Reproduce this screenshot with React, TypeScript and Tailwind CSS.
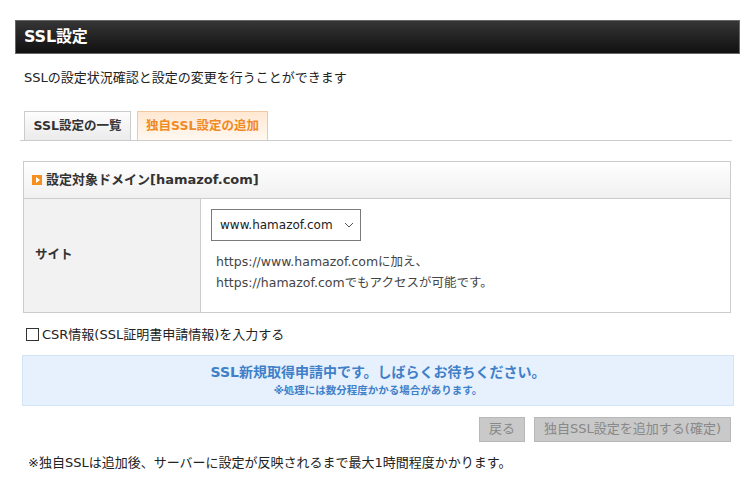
import React from "react";

export default function App() {
  const font = { fontFamily: '"DejaVu Sans", "Noto Sans CJK JP", sans-serif' };
  return (
    <div className="w-[747px] h-[497px] bg-white text-[#333] overflow-hidden" style={font}>
      <div className="pt-[20px] pl-[15px] pr-[7px]">
        <div className="h-[34px] border border-[#666] bg-gradient-to-b from-[#363636] to-[#111] flex items-center pl-[8px]">
          <span className="text-white font-bold text-[16px] tracking-[-0.2px]">SSL設定</span>
        </div>
      </div>
      <div className="pl-[24px] pt-[15px] text-[13px] leading-[18px] text-[#222]">
        SSLの設定状況確認と設定の変更を行うことができます
      </div>
      <div className="mt-[24px] ml-[20px] mr-[15px] flex items-end border-b border-[#ccc] pl-[4px] gap-[6px]">
        <div className="h-[29px] w-[107px] flex items-center justify-center border border-b-0 border-[#ccc] bg-gradient-to-b from-[#fdfdfd] to-[#ebebeb] text-[12.5px] font-bold text-[#333]">
          SSL設定の一覧
        </div>
        <div className="h-[29px] w-[131px] flex items-center justify-center border border-b-0 border-[#f0c9a3] bg-gradient-to-b from-[#ffe8d2] to-[#fff8f1] text-[12.5px] font-bold text-[#f08a24]">
          独自SSL設定の追加
        </div>
      </div>
      <div className="mt-[20px] ml-[23px] mr-[16px] border border-[#ccc]">
        <div className="h-[37px] border-b border-[#ccc] bg-gradient-to-b from-white to-[#f0f0f0] flex items-center pl-[8px] gap-[4px]">
          <span className="w-[10px] h-[10px] bg-[#f5901e] flex items-center justify-center">
            <span className="w-0 h-0 border-y-[3px] border-y-transparent border-l-[4px] border-l-white ml-[1px]"></span>
          </span>
          <span className="text-[13px] font-bold text-[#333]">設定対象ドメイン[hamazof.com]</span>
        </div>
        <div className="flex h-[113px]">
          <div className="w-[177px] bg-[#f2f2f2] border-r border-[#ccc] flex items-center pl-[11px] text-[12.5px] font-bold text-[#333]">
            サイト
          </div>
          <div className="flex-1 pl-[10px] pt-[10px]">
            <div className="w-[150px] h-[32px] border border-[#7a7a7a] flex items-center justify-between pl-[8px] pr-[6px] text-[12px] text-[#222]">
              <span>www.hamazof.com</span>
              <svg width="10" height="6" viewBox="0 0 10 6" fill="none" stroke="#555" strokeWidth="1">
                <path d="M1 1 L5 5 L9 1" />
              </svg>
            </div>
            <div className="mt-[10px] pl-[5px] text-[12.5px] leading-[21px] text-[#444]">
              <div>https://www.hamazof.comに加え、</div>
              <div>https://hamazof.comでもアクセスが可能です。</div>
            </div>
          </div>
        </div>
      </div>
      <div className="mt-[12px] ml-[26px] flex items-center gap-[3px] text-[13px] text-[#222]">
        <span className="w-[13px] h-[13px] border border-[#333] bg-white"></span>
        <span>CSR情報(SSL証明書申請情報)を入力する</span>
      </div>
      <div className="mt-[10px] ml-[22px] mr-[13px] h-[51px] bg-[#e6f1fd] border border-[#d3e4f6] flex flex-col items-center justify-center">
        <div className="text-[14px] font-bold text-[#3f80c8] leading-[20px]">SSL新規取得申請中です。しばらくお待ちください。</div>
        <div className="text-[10.5px] font-bold text-[#3f80c8] leading-[16px]">※処理には数分程度かかる場合があります。</div>
      </div>
      <div className="mt-[11px] mr-[16px] flex justify-end gap-[9px]">
        <div className="h-[25px] px-[9px] bg-[#c9c9c9] border border-[#b8b8b8] flex items-center text-[13px] text-[#888]">戻る</div>
        <div className="h-[25px] px-[9px] bg-[#c9c9c9] border border-[#b8b8b8] flex items-center text-[13px] text-[#888]">独自SSL設定を追加する(確定)</div>
      </div>
      <div className="mt-[11px] ml-[28px] text-[13px] text-[#222]">
        ※独自SSLは追加後、サーバーに設定が反映されるまで最大1時間程度かかります。
      </div>
    </div>
  );
}
